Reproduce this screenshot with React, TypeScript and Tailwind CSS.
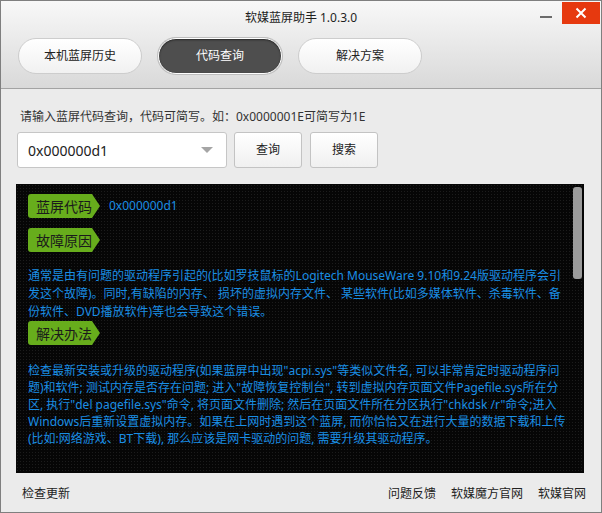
import React from "react";

const font = { fontFamily: '"Noto Sans", "Noto Sans CJK SC", sans-serif' };

function Tab({ label, active }: { label: string; active?: boolean }) {
  return (
    <div
      className={
        active
          ? "flex h-[36px] w-[124px] items-center justify-center rounded-full border border-white bg-[#4e4e4e] text-[12px] text-white shadow-[0_0_0_1px_#bdbdbd,inset_0_1px_2px_rgba(0,0,0,0.5)]"
          : "flex h-[36px] w-[124px] items-center justify-center rounded-full border border-[#cdcdcd] bg-gradient-to-b from-white to-[#f1f1f1] text-[12px] text-[#222]"
      }
    >
      {label}
    </div>
  );
}

function Tag({ label }: { label: string }) {
  return (
    <div className="flex h-[24px] w-[72px] items-center rounded-l-[3px] bg-[#67ad1c] pl-[8px] text-[14px] text-[#1b1b1b] [clip-path:polygon(0_0,calc(100%-8px)_0,100%_50%,calc(100%-8px)_100%,0_100%)]">
      {label}
    </div>
  );
}

const p1 = [
  "通常是由有问题的驱动程序引起的(比如罗技鼠标的Logitech MouseWare 9.10和9.24版驱动程序会引",
  "发这个故障)。同时,有缺陷的内存、 损坏的虚拟内存文件、 某些软件(比如多媒体软件、杀毒软件、备",
  "份软件、DVD播放软件)等也会导致这个错误。",
];

const p2 = [
  "检查最新安装或升级的驱动程序(如果蓝屏中出现\"acpi.sys\"等类似文件名, 可以非常肯定时驱动程序问",
  "题)和软件; 测试内存是否存在问题; 进入\"故障恢复控制台\", 转到虚拟内存页面文件Pagefile.sys所在分",
  "区, 执行\"del pagefile.sys\"命令, 将页面文件删除; 然后在页面文件所在分区执行\"chkdsk /r\"命令;进入",
  "Windows后重新设置虚拟内存。如果在上网时遇到这个蓝屏, 而你恰恰又在进行大量的数据下载和上传",
  "(比如:网络游戏、BT下载), 那么应该是网卡驱动的问题, 需要升级其驱动程序。",
];

export default function App() {
  return (
    <div
      style={font}
      className="relative h-[513px] w-[602px] overflow-hidden border border-[#7f7f7f] bg-[#ebebeb]"
    >
      {/* title bar + tabs */}
      <div className="h-[88px] border-b border-[#a3a3a3] bg-gradient-to-b from-[#f8f8f8] to-[#d9d9d9]">
        <div className="pt-[8px] text-center text-[12px] leading-[18px] text-[#1e1e1e]">
          软媒蓝屏助手 1.0.3.0
        </div>
        <div className="mt-[11px] flex gap-[16px] pl-[17px]">
          <Tab label="本机蓝屏历史" />
          <Tab label="代码查询" active />
          <Tab label="解决方案" />
        </div>
      </div>
      <div className="absolute left-[539px] top-[15px] h-[2px] w-[12px] bg-[#6b6b6b]" />
      <div className="absolute right-[1px] top-[1px] flex h-[22px] w-[38px] items-center justify-center bg-[#e6390f]">
        <svg width="12" height="12" viewBox="0 0 12 12">
          <path d="M1.5 1.5L10.5 10.5M10.5 1.5L1.5 10.5" stroke="white" strokeWidth="2" />
        </svg>
      </div>

      {/* query area */}
      <div className="pl-[19px] pt-[19px] text-[12px] leading-[18px] text-[#333]">
        请输入蓝屏代码查询，代码可简写。如：0x0000001E可简写为1E
      </div>
      <div className="mt-[6px] flex pl-[16px]">
        <div className="flex h-[36px] w-[210px] items-center justify-between rounded-[3px] border border-[#c6c6c6] bg-white pl-[10px] pr-[13px] text-[14px] text-[#222]">
          <span>0x000000d1</span>
          <svg width="12" height="6" viewBox="0 0 12 6">
            <path d="M0 0H12L6 6Z" fill="#a5a5a5" />
          </svg>
        </div>
        <div className="ml-[7px] flex h-[36px] w-[68px] items-center justify-center rounded-[3px] border border-[#c3c3c3] bg-gradient-to-b from-white to-[#f0f0f0] text-[12px] text-[#222]">
          查询
        </div>
        <div className="ml-[8px] flex h-[36px] w-[68px] items-center justify-center rounded-[3px] border border-[#c3c3c3] bg-gradient-to-b from-white to-[#f0f0f0] text-[12px] text-[#222]">
          搜索
        </div>
      </div>

      {/* result panel */}
      <div className="relative ml-[15px] mt-[16px] h-[289px] w-[568px] bg-[#060606] bg-[radial-gradient(#1c1c1c_0.6px,transparent_0.8px)] bg-[length:3px_3px] pl-[12px] pt-[10px] text-[12px] text-[#1a8ee4]">
        <div className="flex items-center">
          <Tag label="蓝屏代码" />
          <span className="ml-[9px] text-[12px]">0x000000d1</span>
        </div>
        <div className="mt-[10px]">
          <Tag label="故障原因" />
        </div>
        <div className="mt-[15px] leading-[18px]">
          {p1.map((l, i) => (
            <div key={i} className="whitespace-nowrap">
              {l}
            </div>
          ))}
        </div>
        <Tag label="解决办法" />
        <div className="mt-[17px] leading-[17px]">
          {p2.map((l, i) => (
            <div key={i} className="whitespace-nowrap">
              {l}
            </div>
          ))}
        </div>
        <div className="absolute right-[2px] top-[3px] h-[92px] w-[9px] rounded-[3px] bg-[#9b9b9b]" />
      </div>

      {/* footer */}
      <div className="flex items-center pl-[21px] pr-[15px] pt-[12px] text-[12px] leading-[18px] text-[#222]">
        <span>检查更新</span>
        <div className="ml-auto flex gap-[15px]">
          <span>问题反馈</span>
          <span>软媒魔方官网</span>
          <span>软媒官网</span>
        </div>
      </div>
    </div>
  );
}
